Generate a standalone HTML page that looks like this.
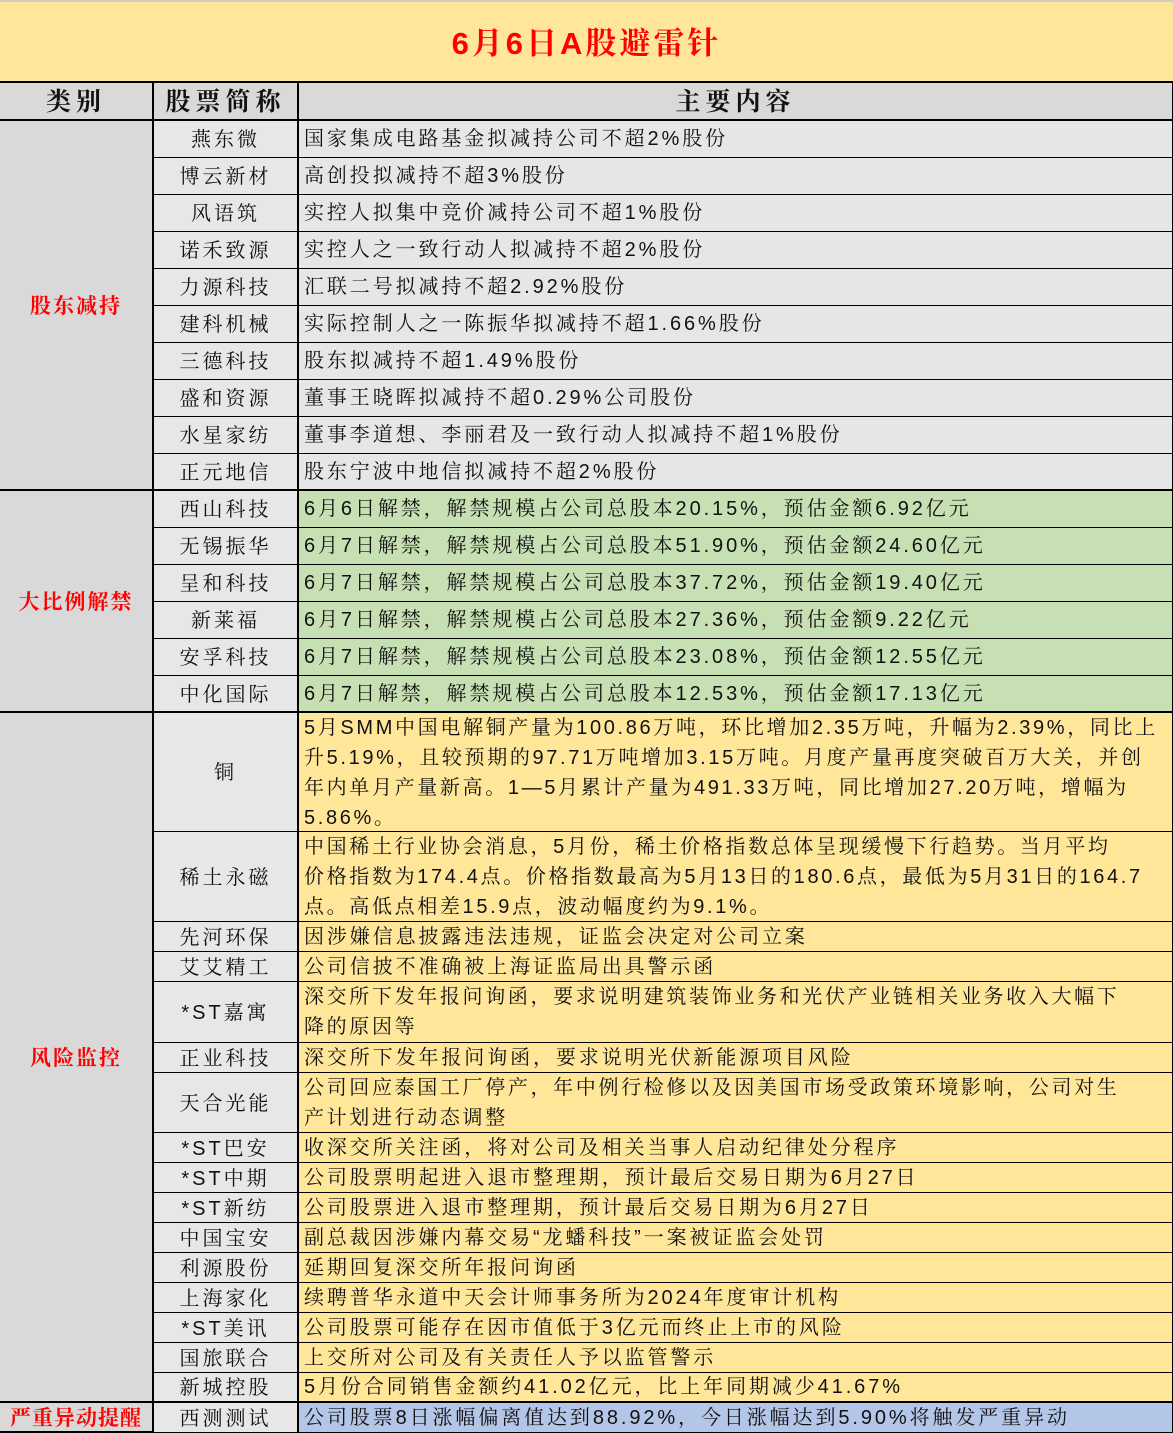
<!DOCTYPE html>
<html><head><meta charset="utf-8"><style>
*{margin:0;padding:0;box-sizing:border-box}
body{width:1173px;height:1433px;position:relative;background:#fff;font-family:"Liberation Sans","Noto Serif CJK SC","Noto Sans CJK SC",serif;overflow:hidden;color:#111}
.a{position:absolute}
.t{left:0;top:0;width:1173px;height:83px;background:#FFE699;border-bottom:2px solid #000;border-top:2px solid #ccc;text-align:center;color:#f00;font-size:31px;font-weight:bold;letter-spacing:3px;line-height:84px}
.h{top:83px;height:38px;background:#D9D9D9;border-bottom:2px solid #000;border-right:2px solid #000;text-align:center;font-size:25px;font-weight:bold;letter-spacing:5px;line-height:38px}
.c{left:0;width:154px;background:#D9D9D9;border-bottom:2px solid #000;border-right:2px solid #000;color:#f00;font-weight:bold;font-size:21px;letter-spacing:2px;display:flex;align-items:center;justify-content:center}
.n{left:154px;width:145px;background:#E7E7E7;border-bottom:1px solid #000;border-right:2px solid #000;text-align:center;font-size:20px;letter-spacing:3px;display:flex;align-items:center;justify-content:center;padding-bottom:3px}
.d{left:299px;width:874px;border-bottom:1px solid #000;border-right:1px solid #000;font-size:20px;letter-spacing:2.9px;padding-left:5px;line-height:30px;display:flex;align-items:center;white-space:nowrap}
.g{background:#E7E6E6}.gr{background:#C6E0B4}.y{background:#FFE699}.b{background:#B4C6E7}
.m{letter-spacing:2.65px}
</style></head><body>
<div class="a t">6月6日A股避雷针</div>
<div class="a h" style="left:0;width:154px">类别</div>
<div class="a h" style="left:154px;width:145px">股票简称</div>
<div class="a h" style="left:299px;width:874px;border-right:1px solid #000">主要内容</div>

<div class="a c" style="top:121px;height:370px">股东减持</div>
<div class="a c" style="top:491px;height:222px">大比例解禁</div>
<div class="a c" style="top:713px;height:690px">风险监控</div>
<div class="a c" style="top:1403px;height:30px;font-size:21px;letter-spacing:1px">严重异动提醒</div>

<div class="a n" style="top:121px;height:37px">燕东微</div><div class="a d g" style="top:121px;height:37px">国家集成电路基金拟减持公司不超2%股份</div>
<div class="a n" style="top:158px;height:37px">博云新材</div><div class="a d g" style="top:158px;height:37px">高创投拟减持不超3%股份</div>
<div class="a n" style="top:195px;height:37px">风语筑</div><div class="a d g" style="top:195px;height:37px">实控人拟集中竞价减持公司不超1%股份</div>
<div class="a n" style="top:232px;height:37px">诺禾致源</div><div class="a d g" style="top:232px;height:37px">实控人之一致行动人拟减持不超2%股份</div>
<div class="a n" style="top:269px;height:37px">力源科技</div><div class="a d g" style="top:269px;height:37px">汇联二号拟减持不超2.92%股份</div>
<div class="a n" style="top:306px;height:37px">建科机械</div><div class="a d g" style="top:306px;height:37px">实际控制人之一陈振华拟减持不超1.66%股份</div>
<div class="a n" style="top:343px;height:37px">三德科技</div><div class="a d g" style="top:343px;height:37px">股东拟减持不超1.49%股份</div>
<div class="a n" style="top:380px;height:37px">盛和资源</div><div class="a d g" style="top:380px;height:37px">董事王晓晖拟减持不超0.29%公司股份</div>
<div class="a n" style="top:417px;height:37px">水星家纺</div><div class="a d g" style="top:417px;height:37px">董事李道想、李丽君及一致行动人拟减持不超1%股份</div>
<div class="a n" style="top:454px;height:37px;border-bottom:2px solid #000">正元地信</div><div class="a d g" style="top:454px;height:37px;border-bottom:2px solid #000">股东宁波中地信拟减持不超2%股份</div>

<div class="a n" style="top:491px;height:37px">西山科技</div><div class="a d gr" style="top:491px;height:37px">6月6日解禁，解禁规模占公司总股本20.15%，预估金额6.92亿元</div>
<div class="a n" style="top:528px;height:37px">无锡振华</div><div class="a d gr" style="top:528px;height:37px">6月7日解禁，解禁规模占公司总股本51.90%，预估金额24.60亿元</div>
<div class="a n" style="top:565px;height:37px">呈和科技</div><div class="a d gr" style="top:565px;height:37px">6月7日解禁，解禁规模占公司总股本37.72%，预估金额19.40亿元</div>
<div class="a n" style="top:602px;height:37px">新莱福</div><div class="a d gr" style="top:602px;height:37px">6月7日解禁，解禁规模占公司总股本27.36%，预估金额9.22亿元</div>
<div class="a n" style="top:639px;height:37px">安孚科技</div><div class="a d gr" style="top:639px;height:37px">6月7日解禁，解禁规模占公司总股本23.08%，预估金额12.55亿元</div>
<div class="a n" style="top:676px;height:37px;border-bottom:2px solid #000">中化国际</div><div class="a d gr" style="top:676px;height:37px;border-bottom:2px solid #000">6月7日解禁，解禁规模占公司总股本12.53%，预估金额17.13亿元</div>

<div class="a n" style="top:713px;height:119px">铜</div><div class="a d y m" style="top:713px;height:119px;align-items:flex-start;padding-top:0">5月SMM中国电解铜产量为100.86万吨，环比增加2.35万吨，升幅为2.39%，同比上<br>升5.19%，且较预期的97.71万吨增加3.15万吨。月度产量再度突破百万大关，并创<br>年内单月产量新高。1—5月累计产量为491.33万吨，同比增加27.20万吨，增幅为<br>5.86%。</div>
<div class="a n" style="top:832px;height:90px">稀土永磁</div><div class="a d y m" style="top:832px;height:90px">中国稀土行业协会消息，5月份，稀土价格指数总体呈现缓慢下行趋势。当月平均<br>价格指数为174.4点。价格指数最高为5月13日的180.6点，最低为5月31日的164.7<br>点。高低点相差15.9点，波动幅度约为9.1%。</div>
<div class="a n" style="top:922px;height:30px">先河环保</div><div class="a d y" style="top:922px;height:30px">因涉嫌信息披露违法违规，证监会决定对公司立案</div>
<div class="a n" style="top:952px;height:30px">艾艾精工</div><div class="a d y" style="top:952px;height:30px">公司信披不准确被上海证监局出具警示函</div>
<div class="a n" style="top:982px;height:61px">*ST嘉寓</div><div class="a d y m" style="top:982px;height:61px">深交所下发年报问询函，要求说明建筑装饰业务和光伏产业链相关业务收入大幅下<br>降的原因等</div>
<div class="a n" style="top:1043px;height:30px">正业科技</div><div class="a d y" style="top:1043px;height:30px">深交所下发年报问询函，要求说明光伏新能源项目风险</div>
<div class="a n" style="top:1073px;height:60px">天合光能</div><div class="a d y m" style="top:1073px;height:60px">公司回应泰国工厂停产，年中例行检修以及因美国市场受政策环境影响，公司对生<br>产计划进行动态调整</div>
<div class="a n" style="top:1133px;height:30px">*ST巴安</div><div class="a d y" style="top:1133px;height:30px">收深交所关注函，将对公司及相关当事人启动纪律处分程序</div>
<div class="a n" style="top:1163px;height:30px">*ST中期</div><div class="a d y" style="top:1163px;height:30px">公司股票明起进入退市整理期，预计最后交易日期为6月27日</div>
<div class="a n" style="top:1193px;height:30px">*ST新纺</div><div class="a d y" style="top:1193px;height:30px">公司股票进入退市整理期，预计最后交易日期为6月27日</div>
<div class="a n" style="top:1223px;height:30px">中国宝安</div><div class="a d y" style="top:1223px;height:30px">副总裁因涉嫌内幕交易“龙蟠科技”一案被证监会处罚</div>
<div class="a n" style="top:1253px;height:30px">利源股份</div><div class="a d y" style="top:1253px;height:30px">延期回复深交所年报问询函</div>
<div class="a n" style="top:1283px;height:30px">上海家化</div><div class="a d y" style="top:1283px;height:30px">续聘普华永道中天会计师事务所为2024年度审计机构</div>
<div class="a n" style="top:1313px;height:30px">*ST美讯</div><div class="a d y" style="top:1313px;height:30px">公司股票可能存在因市值低于3亿元而终止上市的风险</div>
<div class="a n" style="top:1343px;height:30px">国旅联合</div><div class="a d y" style="top:1343px;height:30px">上交所对公司及有关责任人予以监管警示</div>
<div class="a n" style="top:1373px;height:30px;border-bottom:2px solid #000">新城控股</div><div class="a d y" style="top:1373px;height:30px;border-bottom:2px solid #000">5月份合同销售金额约41.02亿元，比上年同期减少41.67%</div>

<div class="a n" style="top:1403px;height:30px">西测测试</div><div class="a d b" style="top:1403px;height:30px">公司股票8日涨幅偏离值达到88.92%，今日涨幅达到5.90%将触发严重异动</div>
</body></html>
